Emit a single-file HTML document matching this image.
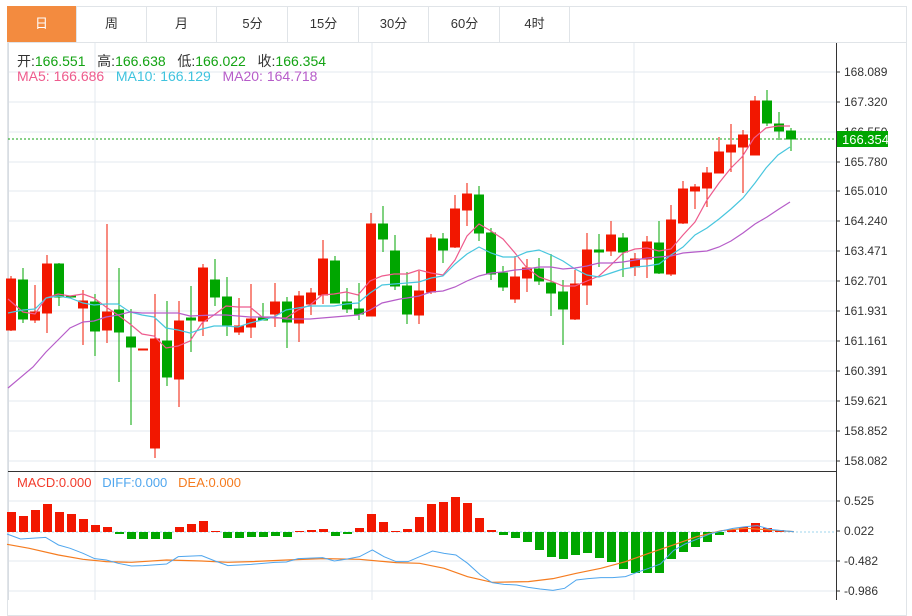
<!DOCTYPE html>
<html><head><meta charset="utf-8"><style>
*{margin:0;padding:0;box-sizing:border-box}
body{width:912px;height:600px;background:#fff;position:relative;overflow:hidden;font-family:"Liberation Sans","Noto Sans CJK SC",sans-serif}
.frame{position:absolute;left:7px;top:6px;width:900px;height:610px;border:1px solid #e0e4e8}
.tabs{position:absolute;left:7px;top:6px;height:37px;width:900px;border-bottom:1px solid #e0e4e8}
.tab{position:absolute;top:0;height:36px;width:70px;border-right:1px solid #e0e4e8;text-align:center;line-height:36px;font-size:13px;color:#333}
.tab.a{background:#f38b3f;color:#fff}
.t{position:absolute;font-size:14px;white-space:nowrap}
.g{color:#13a313}
svg{position:absolute;left:0;top:0}
</style></head><body>
<div class="frame"></div>
<div class="tabs">
<div class="tab a" style="left:0">日</div>
<div class="tab" style="left:70px">周</div>
<div class="tab" style="left:140px">月</div>
<div class="tab" style="left:211px">5分</div>
<div class="tab" style="left:282px">15分</div>
<div class="tab" style="left:352px">30分</div>
<div class="tab" style="left:423px">60分</div>
<div class="tab" style="left:493px">4时</div>
</div>
<svg width="912" height="600" viewBox="0 0 912 600">
<g stroke="#e3e9ef" stroke-width="1">
<line x1="8" y1="72" x2="836" y2="72"/><line x1="8" y1="102" x2="836" y2="102"/><line x1="8" y1="132" x2="836" y2="132"/><line x1="8" y1="162" x2="836" y2="162"/><line x1="8" y1="191" x2="836" y2="191"/><line x1="8" y1="221" x2="836" y2="221"/><line x1="8" y1="251" x2="836" y2="251"/><line x1="8" y1="281" x2="836" y2="281"/><line x1="8" y1="311" x2="836" y2="311"/><line x1="8" y1="341" x2="836" y2="341"/><line x1="8" y1="371" x2="836" y2="371"/><line x1="8" y1="401" x2="836" y2="401"/><line x1="8" y1="431" x2="836" y2="431"/><line x1="8" y1="461" x2="836" y2="461"/>
<line x1="8" y1="501" x2="836" y2="501"/><line x1="8" y1="561" x2="836" y2="561"/><line x1="8" y1="591" x2="836" y2="591"/>
<line x1="95" y1="43" x2="95" y2="600"/><line x1="372" y1="43" x2="372" y2="600"/><line x1="634" y1="43" x2="634" y2="600"/>
</g>
<line x1="8.5" y1="43" x2="8.5" y2="600" stroke="#d8dde3"/>
<line x1="836.5" y1="43" x2="836.5" y2="600" stroke="#333"/>
<line x1="8" y1="471.5" x2="836" y2="471.5" stroke="#333"/>
<g stroke="#333"><line x1="836" y1="72" x2="840" y2="72"/><line x1="836" y1="102" x2="840" y2="102"/><line x1="836" y1="132" x2="840" y2="132"/><line x1="836" y1="162" x2="840" y2="162"/><line x1="836" y1="191" x2="840" y2="191"/><line x1="836" y1="221" x2="840" y2="221"/><line x1="836" y1="251" x2="840" y2="251"/><line x1="836" y1="281" x2="840" y2="281"/><line x1="836" y1="311" x2="840" y2="311"/><line x1="836" y1="341" x2="840" y2="341"/><line x1="836" y1="371" x2="840" y2="371"/><line x1="836" y1="401" x2="840" y2="401"/><line x1="836" y1="431" x2="840" y2="431"/><line x1="836" y1="461" x2="840" y2="461"/><line x1="836" y1="501" x2="840" y2="501"/><line x1="836" y1="531" x2="840" y2="531"/><line x1="836" y1="561" x2="840" y2="561"/><line x1="836" y1="591" x2="840" y2="591"/></g>
<g font-size="12" fill="#333" font-family="Liberation Sans,sans-serif">
<text x="844" y="76">168.089</text><text x="844" y="106">167.320</text><text x="844" y="136">166.550</text><text x="844" y="166">165.780</text><text x="844" y="195">165.010</text><text x="844" y="225">164.240</text><text x="844" y="255">163.471</text><text x="844" y="285">162.701</text><text x="844" y="315">161.931</text><text x="844" y="345">161.161</text><text x="844" y="375">160.391</text><text x="844" y="405">159.621</text><text x="844" y="435">158.852</text><text x="844" y="465">158.082</text>
<text x="844" y="505">0.525</text><text x="844" y="535">0.022</text><text x="844" y="565">-0.482</text><text x="844" y="595">-0.986</text>
</g>
<line x1="8" y1="139" x2="836" y2="139" stroke="#13a313" stroke-dasharray="2,2"/>
<rect x="837" y="131" width="51" height="16" fill="#00a600"/>
<text x="842" y="144" font-size="13" fill="#fff" font-family="Liberation Sans,sans-serif">166.354</text>
<g stroke-width="1">
<g fill="#f21700" stroke="#f21700">
<line x1="11" y1="276" x2="11" y2="331"/><rect x="6.5" y="279" width="9" height="51"/>
<line x1="35" y1="285" x2="35" y2="323"/><rect x="30.5" y="312" width="9" height="8"/>
<line x1="47" y1="255" x2="47" y2="333"/><rect x="42.5" y="264" width="9" height="49"/>
<line x1="83" y1="290" x2="83" y2="345"/><rect x="78.5" y="301" width="9" height="7"/>
<line x1="107" y1="224" x2="107" y2="343"/><rect x="102.5" y="312" width="9" height="18"/>
<rect x="138.5" y="349" width="9" height="1"/>
<line x1="155" y1="294" x2="155" y2="458"/><rect x="150.5" y="339" width="9" height="109"/>
<line x1="179" y1="301" x2="179" y2="407"/><rect x="174.5" y="321" width="9" height="58"/>
<line x1="203" y1="264" x2="203" y2="336"/><rect x="198.5" y="268" width="9" height="53"/>
<line x1="239" y1="298" x2="239" y2="335"/><rect x="234.5" y="326" width="9" height="6"/>
<line x1="251" y1="284" x2="251" y2="338"/><rect x="246.5" y="319" width="9" height="8"/>
<line x1="275" y1="283" x2="275" y2="327"/><rect x="270.5" y="302" width="9" height="12"/>
<line x1="299" y1="291" x2="299" y2="342"/><rect x="294.5" y="296" width="9" height="27"/>
<line x1="311" y1="288" x2="311" y2="315"/><rect x="306.5" y="293" width="9" height="11"/>
<line x1="323" y1="240" x2="323" y2="304"/><rect x="318.5" y="259" width="9" height="36"/>
<line x1="371" y1="213" x2="371" y2="316"/><rect x="366.5" y="224" width="9" height="92"/>
<line x1="419" y1="271" x2="419" y2="324"/><rect x="414.5" y="291" width="9" height="24"/>
<line x1="431" y1="234" x2="431" y2="294"/><rect x="426.5" y="238" width="9" height="54"/>
<line x1="455" y1="195" x2="455" y2="248"/><rect x="450.5" y="209" width="9" height="38"/>
<line x1="467" y1="183" x2="467" y2="226"/><rect x="462.5" y="194" width="9" height="16"/>
<line x1="515" y1="256" x2="515" y2="303"/><rect x="510.5" y="277" width="9" height="22"/>
<line x1="527" y1="259" x2="527" y2="292"/><rect x="522.5" y="268" width="9" height="10"/>
<line x1="575" y1="270" x2="575" y2="320"/><rect x="570.5" y="284" width="9" height="35"/>
<line x1="587" y1="233" x2="587" y2="305"/><rect x="582.5" y="250" width="9" height="35"/>
<line x1="611" y1="221" x2="611" y2="256"/><rect x="606.5" y="235" width="9" height="16"/>
<line x1="635" y1="253" x2="635" y2="276"/><rect x="630.5" y="259" width="9" height="8"/>
<line x1="647" y1="236" x2="647" y2="278"/><rect x="642.5" y="242" width="9" height="17"/>
<line x1="671" y1="205" x2="671" y2="276"/><rect x="666.5" y="220" width="9" height="54"/>
<line x1="683" y1="181" x2="683" y2="224"/><rect x="678.5" y="189" width="9" height="34"/>
<line x1="695" y1="184" x2="695" y2="209"/><rect x="690.5" y="187" width="9" height="4"/>
<line x1="707" y1="167" x2="707" y2="207"/><rect x="702.5" y="173" width="9" height="15"/>
<line x1="719" y1="137" x2="719" y2="172"/><rect x="714.5" y="152" width="9" height="21"/>
<line x1="731" y1="124" x2="731" y2="172"/><rect x="726.5" y="145" width="9" height="7"/>
<line x1="743" y1="130" x2="743" y2="193"/><rect x="738.5" y="135" width="9" height="12"/>
<line x1="755" y1="96" x2="755" y2="155"/><rect x="750.5" y="101" width="9" height="54"/>
</g>
<g fill="#00a600" stroke="#00a600">
<line x1="23" y1="268" x2="23" y2="323"/><rect x="18.5" y="280" width="9" height="39"/>
<line x1="59" y1="263" x2="59" y2="306"/><rect x="54.5" y="264" width="9" height="33"/>
<rect x="66.5" y="296" width="9" height="1"/>
<line x1="95" y1="294" x2="95" y2="356"/><rect x="90.5" y="302" width="9" height="29"/>
<line x1="119" y1="268" x2="119" y2="382"/><rect x="114.5" y="310" width="9" height="22"/>
<line x1="131" y1="309" x2="131" y2="425"/><rect x="126.5" y="337" width="9" height="10"/>
<line x1="167" y1="301" x2="167" y2="386"/><rect x="162.5" y="341" width="9" height="36"/>
<line x1="191" y1="286" x2="191" y2="352"/><rect x="186.5" y="318" width="9" height="2"/>
<line x1="215" y1="259" x2="215" y2="306"/><rect x="210.5" y="280" width="9" height="17"/>
<line x1="227" y1="277" x2="227" y2="336"/><rect x="222.5" y="297" width="9" height="28"/>
<line x1="263" y1="303" x2="263" y2="320"/><rect x="258.5" y="317" width="9" height="3"/>
<line x1="287" y1="297" x2="287" y2="348"/><rect x="282.5" y="302" width="9" height="20"/>
<line x1="335" y1="256" x2="335" y2="300"/><rect x="330.5" y="261" width="9" height="42"/>
<line x1="347" y1="288" x2="347" y2="313"/><rect x="342.5" y="302" width="9" height="7"/>
<line x1="359" y1="283" x2="359" y2="320"/><rect x="354.5" y="309" width="9" height="5"/>
<line x1="383" y1="206" x2="383" y2="252"/><rect x="378.5" y="224" width="9" height="15"/>
<line x1="395" y1="235" x2="395" y2="290"/><rect x="390.5" y="251" width="9" height="35"/>
<line x1="407" y1="272" x2="407" y2="324"/><rect x="402.5" y="286" width="9" height="28"/>
<line x1="443" y1="233" x2="443" y2="263"/><rect x="438.5" y="239" width="9" height="11"/>
<line x1="479" y1="186" x2="479" y2="241"/><rect x="474.5" y="195" width="9" height="38"/>
<line x1="491" y1="228" x2="491" y2="280"/><rect x="486.5" y="233" width="9" height="41"/>
<line x1="503" y1="266" x2="503" y2="291"/><rect x="498.5" y="273" width="9" height="14"/>
<line x1="539" y1="258" x2="539" y2="285"/><rect x="534.5" y="269" width="9" height="12"/>
<line x1="551" y1="254" x2="551" y2="316"/><rect x="546.5" y="283" width="9" height="10"/>
<line x1="563" y1="280" x2="563" y2="345"/><rect x="558.5" y="292" width="9" height="17"/>
<line x1="599" y1="234" x2="599" y2="267"/><rect x="594.5" y="250" width="9" height="2"/>
<line x1="623" y1="233" x2="623" y2="277"/><rect x="618.5" y="238" width="9" height="14"/>
<line x1="659" y1="221" x2="659" y2="274"/><rect x="654.5" y="243" width="9" height="30"/>
<line x1="767" y1="90" x2="767" y2="126"/><rect x="762.5" y="101" width="9" height="22"/>
<line x1="779" y1="112" x2="779" y2="140"/><rect x="774.5" y="124" width="9" height="7"/>
<line x1="791" y1="128" x2="791" y2="151"/><rect x="786.5" y="131" width="9" height="8"/>
</g>
</g>
<g fill="none" stroke-width="1.2">
<polyline stroke="#ee5b8d" points="8,299 23,312 35,314 46,298 58,294 70,296 83,294 94,298 106,307 118,315 130,324 142,334 154,336 166,348 178,346 190,341 202,323 214,315 226,306 238,307 250,307 262,317 274,318 286,318 298,310 310,305 322,295 334,294 346,292 358,295 370,281 382,276 394,274 407,274 419,270 431,273 443,275 455,260 467,236 479,224 491,231 503,239 515,253 527,268 539,277 551,281 563,286 575,286 587,281 599,276 611,265 623,253 635,249 647,248 659,251 671,249 683,235 695,222 707,200 719,183 731,168 742,157 754,138 766,128 778,126 790,126"/>
<polyline stroke="#48c6de" points="8,313 23,310 35,309 46,298 58,296 70,298 83,303 94,305 106,304 118,304 130,312 142,315 154,317 166,328 178,330 190,333 202,329 214,326 226,326 238,327 250,323 262,320 274,317 286,310 298,308 310,306 322,306 334,306 346,304 358,303 370,293 382,285 394,284 407,283 419,282 431,278 443,276 455,264 467,254 479,247 491,253 503,257 515,257 527,252 539,250 551,255 563,261 575,269 587,275 599,277 611,273 623,269 635,267 647,266 659,264 671,255 683,247 695,235 707,228 719,219 731,209 743,198 755,183 766,168 778,155 790,147"/>
<polyline stroke="#b65dc9" points="8,388 33,367 46,352 58,340 70,328 83,322 94,321 106,317 118,315 130,312 142,313 166,313 178,313 190,316 214,315 226,315 250,317 274,317 286,319 310,319 322,318 334,317 358,315 370,310 382,303 400,299 407,298 419,296 431,292 443,291 455,287 467,281 479,276 491,273 503,272 515,270 527,269 539,267 551,267 563,269 575,268 587,266 599,263 611,263 623,262 635,260 647,258 659,257 671,256 683,253 695,252 707,251 719,247 731,241 743,233 755,224 767,217 779,209 790,202"/>
</g>
<line x1="8" y1="532" x2="836" y2="532" stroke="#9fd6ee" stroke-dasharray="2,2"/>
<g fill="#f21700">
<rect x="7" y="512" width="9" height="20"/><rect x="19" y="516" width="9" height="16"/><rect x="31" y="510" width="9" height="22"/><rect x="43" y="504" width="9" height="28"/><rect x="55" y="512" width="9" height="20"/><rect x="67" y="514" width="9" height="18"/><rect x="79" y="519" width="9" height="13"/><rect x="91" y="525" width="9" height="7"/><rect x="103" y="527" width="9" height="5"/>
<rect x="175" y="527" width="9" height="5"/><rect x="187" y="524" width="9" height="8"/><rect x="199" y="521" width="9" height="11"/><rect x="211" y="531" width="9" height="1"/>
<rect x="295" y="531" width="9" height="1"/><rect x="307" y="530" width="9" height="2"/><rect x="319" y="529" width="9" height="3"/>
<rect x="355" y="528" width="9" height="4"/><rect x="367" y="514" width="9" height="18"/><rect x="379" y="522" width="9" height="10"/><rect x="391" y="531" width="9" height="1"/><rect x="403" y="529" width="9" height="3"/><rect x="415" y="517" width="9" height="15"/><rect x="427" y="504" width="9" height="28"/><rect x="439" y="502" width="9" height="30"/><rect x="451" y="497" width="9" height="35"/><rect x="463" y="503" width="9" height="29"/><rect x="475" y="518" width="9" height="14"/><rect x="487" y="530" width="9" height="2"/>
<rect x="727" y="530" width="9" height="2"/><rect x="739" y="527" width="9" height="5"/><rect x="751" y="523" width="9" height="9"/><rect x="763" y="528" width="9" height="4"/><rect x="775" y="530" width="9" height="2"/>
</g>
<g fill="#00a600">
<rect x="115" y="532" width="9" height="2"/><rect x="127" y="532" width="9" height="7"/><rect x="139" y="532" width="9" height="7"/><rect x="151" y="532" width="9" height="7"/><rect x="163" y="532" width="9" height="7"/>
<rect x="223" y="532" width="9" height="6"/><rect x="235" y="532" width="9" height="6"/><rect x="247" y="532" width="9" height="5"/><rect x="259" y="532" width="9" height="5"/><rect x="271" y="532" width="9" height="4"/><rect x="283" y="532" width="9" height="5"/>
<rect x="331" y="532" width="9" height="4"/><rect x="343" y="532" width="9" height="2"/>
<rect x="499" y="532" width="9" height="3"/><rect x="511" y="532" width="9" height="6"/><rect x="523" y="532" width="9" height="10"/><rect x="535" y="532" width="9" height="18"/><rect x="547" y="532" width="9" height="25"/><rect x="559" y="532" width="9" height="27"/><rect x="571" y="532" width="9" height="23"/><rect x="583" y="532" width="9" height="21"/><rect x="595" y="532" width="9" height="26"/><rect x="607" y="532" width="9" height="30"/><rect x="619" y="532" width="9" height="37"/><rect x="631" y="532" width="9" height="41"/><rect x="643" y="532" width="9" height="41"/><rect x="655" y="532" width="9" height="41"/><rect x="667" y="532" width="9" height="27"/><rect x="679" y="532" width="9" height="20"/><rect x="691" y="532" width="9" height="15"/><rect x="703" y="532" width="9" height="10"/><rect x="715" y="532" width="9" height="3"/>
</g>
<g transform="translate(0,460) scale(0.5845,0.3333)" fill="none">
<polyline vector-effect="non-scaling-stroke" stroke="#f57c20" stroke-width="1.2" points="12,253 50,265 100,285 142,298 182,305 225,307 285,300 345,303 390,307 430,305 490,300 552,296 615,298 678,308 718,310 760,325 800,350 842,367 904,365 946,356 986,340 1028,325 1070,305 1110,280 1152,255 1192,230 1234,212 1276,205 1318,210 1358,215"/>
<polyline vector-effect="non-scaling-stroke" stroke="#4fa6ee" stroke-width="1" points="12,222 35,237 78,232 100,255 120,265 142,280 162,296 182,300 202,310 225,318 245,317 285,312 305,290 345,287 368,303 390,317 430,313 470,307 490,306 510,296 552,293 572,303 594,297 615,290 637,270 657,290 678,305 698,305 718,290 740,273 760,280 780,285 800,310 822,345 842,368 862,373 884,375 904,382 924,387 946,391 966,385 986,360 1006,356 1028,353 1048,353 1070,350 1090,337 1110,325 1130,312 1152,272 1172,252 1192,238 1214,222 1234,213 1254,205 1276,200 1296,197 1318,208 1338,212 1358,215"/>
</g>
</svg>
<div class="t" style="left:17px;top:51px;color:#333">开:<span class="g">166.551</span>&nbsp;&nbsp;&nbsp;高:<span class="g">166.638</span>&nbsp;&nbsp;&nbsp;低:<span class="g">166.022</span>&nbsp;&nbsp;&nbsp;收:<span class="g">166.354</span></div>
<div class="t" style="left:17px;top:68px"><span style="color:#ee5b8d">MA5: 166.686</span>&nbsp;&nbsp;&nbsp;<span style="color:#3fc3de">MA10: 166.129</span>&nbsp;&nbsp;&nbsp;<span style="color:#b65dc9">MA20: 164.718</span></div>
<div class="t" style="left:17px;top:475px;font-size:13px"><span style="color:#f23a2a">MACD:0.000</span>&nbsp;&nbsp;&nbsp;<span style="color:#4fa6ee">DIFF:0.000</span>&nbsp;&nbsp;&nbsp;<span style="color:#f57c20">DEA:0.000</span></div>
</body></html>
